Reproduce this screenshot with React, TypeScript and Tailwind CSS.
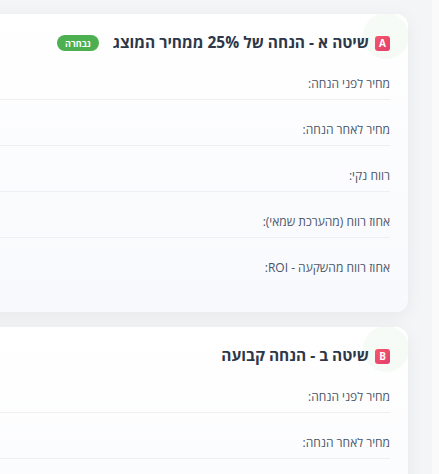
const FONT = { fontFamily: '"Open Sans", "Liberation Sans", "DejaVu Sans", sans-serif' };

type Method = {
  letter: string;
  title: string;
  chosen?: boolean;
  rows: string[];
};

const METHODS: Method[] = [
  {
    letter: 'A',
    title: 'שיטה א - הנחה של 25% ממחיר המוצג',
    chosen: true,
    rows: [
      'מחיר לפני הנחה:',
      'מחיר לאחר הנחה:',
      'רווח נקי:',
      'אחוז רווח (מהערכת שמאי):',
      'אחוז רווח מהשקעה - ROI:',
    ],
  },
  {
    letter: 'B',
    title: 'שיטה ב - הנחה קבועה',
    rows: [
      'מחיר לפני הנחה:',
      'מחיר לאחר הנחה:',
      'רווח נקי:',
      'אחוז רווח (מהערכת שמאי):',
      'אחוז רווח מהשקעה - ROI:',
    ],
  },
];

function MethodCard({ method }: { method: Method }) {
  return (
    <div className="relative w-[720px] shrink-0 overflow-hidden rounded-xl bg-gradient-to-b from-white to-[#f8f9fc] px-[18px] pt-[18px] pb-[29px] shadow-[0_4px_18px_rgba(0,0,0,0.06)]">
      {/* corner glow */}
      <div className="absolute top-[-1px] right-[-1px] h-[46px] w-[46px] rounded-full bg-[#4caf50]/[0.05]" />

      <div className="relative flex h-[22px] items-center gap-[6px]">
        <span className="flex h-[15px] w-[15px] items-center justify-center rounded-[3px] bg-gradient-to-br from-[#f5576c] to-[#e33d6c] text-[10px] font-bold leading-none text-white">
          {method.letter}
        </span>
        <h3 className="text-[15.5px] font-bold leading-none text-[#2d3748]">{method.title}</h3>
        {method.chosen && (
          <span className="mr-[8px] flex h-[16px] items-center rounded-full bg-[#4caf50] px-[8px] text-[9px] font-bold leading-none text-white">
            נבחרה
          </span>
        )}
      </div>

      <div className="relative">
        {method.rows.map((label, i) => (
          <div
            key={label}
            className={
              i < method.rows.length - 1
                ? 'flex justify-between border-b border-[#edeff2] pt-[21px] pb-[6px]'
                : 'flex justify-between pt-[21px] pb-[6px]'
            }
          >
            <span className="text-[12px] leading-[18px] text-[#4a5568]">{label}</span>
            <span className="text-[13px] font-semibold leading-[18px] text-[#2d3748]">—</span>
          </div>
        ))}
      </div>
    </div>
  );
}

export default function App() {
  return (
    <div dir="rtl" style={FONT} className="flex h-[474px] w-[439px] overflow-hidden bg-[#f4f5f6]">
      <div className="w-[7px] shrink-0 bg-[#fafafa]" />
      <div className="flex flex-1 flex-col gap-[15px] overflow-hidden pt-[14px] pr-[24px]">
        {METHODS.map((m) => (
          <MethodCard key={m.letter} method={m} />
        ))}
      </div>
    </div>
  );
}
